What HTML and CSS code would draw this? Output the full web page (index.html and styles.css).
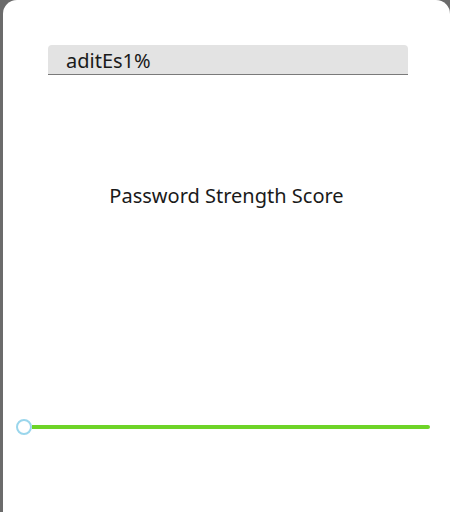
FILE: index.html
```html
<!DOCTYPE html>
<html>
<head>
<meta charset="utf-8">
<link rel="stylesheet" href="styles.css">
</head>
<body>
<div class="panel">
  <div class="field"><span class="field-text">aditEs1%</span></div>
  <div class="title">Password Strength Score</div>
  <div class="slider">
    <div class="thumb"></div>
    <div class="track"></div>
  </div>
</div>
</body>
</html>
```
FILE: styles.css
```css
html, body {
  margin: 0;
  padding: 0;
  height: 100%;
  background: #6b6b6b;
  overflow: hidden;
}
.panel {
  margin-left: 3px;
  height: 100%;
  background: #ffffff;
  border-radius: 14px 14px 0 0;
  display: flex;
  flex-direction: column;
  padding-top: 45px;
  box-sizing: border-box;
  font-family: "Noto Sans", "Open Sans", sans-serif;
  color: #1a1a1a;
}
.field {
  margin-left: 45px;
  height: 29px;
  background: #e3e3e3;
  border-bottom: 1px solid #7a7a7a;
  border-radius: 4px 4px 0 0;
  display: flex;
  align-items: center;
  padding-left: 18px;
  box-sizing: content-box;
  width: 342px;
}
.field-text {
  font-size: 20px;
  line-height: 28px;
  margin-top: 2px;
}
.title {
  margin-top: 107px;
  text-align: center;
  font-size: 20px;
  line-height: 28px;
}
.slider {
  margin-top: 209px;
  margin-left: 13px;
  margin-right: 20px;
  height: 16px;
  display: flex;
  align-items: center;
}
.thumb {
  width: 12px;
  height: 12px;
  border: 2px solid #9ad6ec;
  border-radius: 50%;
  background: #ffffff;
  flex: none;
}
.track {
  flex: 1;
  height: 4px;
  background: #6ed427;
  border-radius: 0 2px 2px 0;
}
```
